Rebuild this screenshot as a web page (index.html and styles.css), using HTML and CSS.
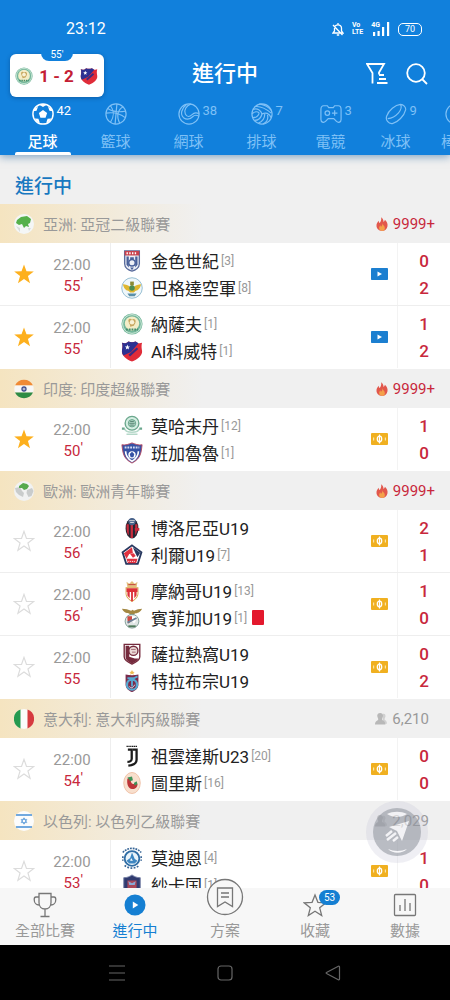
FILE: index.html
```html
<!DOCTYPE html>
<html lang="zh-Hant">
<head>
<meta charset="utf-8">
<meta name="viewport" content="width=device-width, initial-scale=1">
<title>進行中</title>
<link rel="stylesheet" href="styles.css">
</head>
<body>
<svg class="sprite" aria-hidden="true">
  <symbol id="star" viewBox="0 0 24 24"><path d="M12 1.500l2.700 7.600 8 .2-6.400 4.900 2.300 7.800L12 17.400 5.400 22l2.300-7.800L1.300 9.300l8-.2z"/></symbol>
  <symbol id="star-line" viewBox="0 0 24 24"><path d="M12 1.500l2.700 7.600 8 .2-6.400 4.900 2.300 7.800L12 17.400 5.400 22l2.300-7.800L1.300 9.300l8-.2z"/></symbol>
  <symbol id="fire" viewBox="0 0 14 16"><path fill="#e2574c" d="M6 0c2 1.600 3 3.500 2.700 5.600 1-.5 1.500-1.300 1.600-2.500C12.400 5 14 7.500 13.400 10.500 12.800 13.800 10.300 16 7 16S1 13.600.6 10.500C.3 8 1.500 6 3.200 4.200c0 1.300.3 2.200 1 2.700C5.600 5 6.600 2.800 6 0z"/><path fill="#f4a14a" d="M7.500 7c.2 2 2.800 3 2.800 5.600A3.200 3.200 0 0 1 7 16a3.200 3.200 0 0 1-3.300-3.200c0-1.500.7-2.500 1.500-3.300 0 1 .3 1.500.8 1.800C7 10 7.600 8.800 7.500 7z"/></symbol>
  <symbol id="people" viewBox="0 0 14 14"><path fill="#d0d0d0" d="M9 1c2.500-.6 3.500 1 3.200 3-.2 1.500-1 2-1 3.300 0 1.200 2.800 1.300 2.800 5.200H9z"/><path fill="#b8b8b8" d="M6 0c2 0 3.500 1.400 3.400 3.300C9.300 5.300 8.200 6.200 8.200 7.300c0 1.600 4 1.800 4 6.200H0c0-4.400 3.800-4.600 3.800-6.200 0-1.100-1.100-2-1.200-4C2.500 1.400 4 0 6 0z"/></symbol>
  <symbol id="video" viewBox="0 0 17 12"><rect width="17" height="12" rx=".8" fill="#1c7fd0"/><path fill="#fff" d="M6.500 3.500L11 6 6.500 8.500z"/></symbol>
  <symbol id="ticket" viewBox="0 0 17 12"><rect width="17" height="12" rx="1" fill="#f0b020"/><path d="M8.500 1.500v9" stroke="#fff" stroke-width="1.200"/><ellipse cx="8.500" cy="6" rx="2.200" ry="2.800" fill="none" stroke="#fff" stroke-width="1.300"/><path fill="#fbe3a8" d="M2 4.500h1.200v3H2zM13.800 4.500H15v3h-1.200z"/></symbol>
  <symbol id="nasaf" viewBox="0 0 24 24"><circle cx="12" cy="12" r="11.500" fill="#74b79b"/><circle cx="12" cy="12" r="10.200" fill="none" stroke="#d9eee0"/><circle cx="12" cy="11.500" r="7.800" fill="#f3edc8"/><path fill="#c8a75f" d="M8 8c1-2.500 3-2 4-.5 1-1.500 4-1 4 1.500 0 2-1 3-2 5l-4 1c.500-2-2-4-2-7z"/><circle cx="12" cy="10" r="2.500" fill="#f8f1d6"/><path d="M5.500 18h13" stroke="#448d6a" stroke-width="2" stroke-dasharray="2 1"/></symbol>
  <symbol id="kuwait" viewBox="0 0 24 24"><path fill="#e02c39" d="M1 3c3 1 5.500.5 7-1.500 3 1.200 5 1.200 8 0C17.500 3.500 20 4 23 3c-1 3-.5 6 0 9 .5 5-5 9.500-11 11.500C6 21.500.5 17 1 12c.5-3 1-6 0-9z"/><path fill="#2c3192" d="M1 3c3 1 5.500.5 7-1.500 3 1.200 5 1.200 8 0l3 2L11 13 2.500 17C.5 14 1 11 1.500 8.500 1.800 6 1.600 4.500 1 3z"/><path fill="#fff" d="M7 5l.8 2 2 .1-1.600 1.300.6 2L7 9.300l-1.800 1.100.6-2-1.600-1.300 2-.1z"/><path d="M9 17l9-8" stroke="#3c2c82" stroke-width="2.500"/></symbol>
</svg>

<div class="app">
  <header class="header">
    <div class="status">
      <span>23:12</span>
      <span class="status-icons">
        <svg width="12" height="13" viewBox="0 0 12 13" fill="none" stroke="#fff" stroke-width="1.300"><path d="M1 10h10L9.500 8V5C9.500 3 8 1.800 6 1.800S2.500 3 2.500 5v3zM4.800 12h2.400M1 2l9.500 10M6 0v2"/></svg>
        <span class="volte"><b>Vo</b><b>LTE</b></span>
        <span class="signal"><b>4G</b><svg width="18" height="14" viewBox="0 0 18 14" fill="#fff"><path d="M1 10h2.200v4H1zM5.500 9h2.200v5H5.500zM10 5h2.200v9H10zM15 0h2.200v14H15z"/></svg></span>
        <span class="battery">70</span>
      </span>
    </div>
    <div class="bar">
      <div class="live">
        <span class="live-time">55'</span>
        <svg class="live-crest"><use href="#nasaf"/></svg>
        <strong>1 - 2</strong>
        <svg class="live-crest"><use href="#kuwait"/></svg>
      </div>
      <h1>進行中</h1>
      <div class="tools">
        <button type="button" aria-label="篩選"><svg width="22" height="21" viewBox="0 0 22 21" fill="none" stroke="#fff" stroke-width="1.800"><path d="M6.500 20.500V10L1 1h17l-5 8.500v2M13 12h5M13 16h7M11 20h10.500"/></svg></button>
        <button type="button" aria-label="搜尋"><svg width="22" height="22" viewBox="0 0 22 22" fill="none" stroke="#fff" stroke-width="1.800"><circle cx="10" cy="10" r="8.800"/><path d="M16 16l5 5"/></svg></button>
      </div>
    </div>
    <nav class="tabs">
      <button type="button" class="tab active"><span class="tab-icon"><svg viewBox="0 0 24 24"><circle cx="12" cy="12" r="11" fill="none" stroke="#fff" stroke-width="1.600"/><path fill="#fff" d="M12 7.500l4.500 3.300-1.700 5.200H9.200l-1.700-5.200zM8 2l4 2.300L16 2l-4-1zM1.500 9L5 8.500 6.500 4 3 6zM22.500 9L19 8.500 17.500 4 21 6zM3 17l4 .2 1.500 4.300L5 20zM21 17l-4 .2-1.500 4.300L19 20z"/></svg><i>42</i></span>足球</button>
      <button type="button" class="tab"><span class="tab-icon"><svg class="line" viewBox="0 0 24 24"><circle cx="12" cy="12" r="11"/><path d="M13 1L11 23M1 11c7-1 15 0 21 5M6 3c4 5 4 12 0 18M20 4c-6 3-8 10-4 18M3 6c6 4 13 4 19 3"/></svg></span>籃球</button>
      <button type="button" class="tab"><span class="tab-icon"><svg class="line" viewBox="0 0 24 24"><circle cx="12" cy="12" r="11"/><path d="M14 1C9 3 6 8 8 12c2 4 5 3 7 1s5-3 8-1M9 2C4 6 2 12 6 16c4 3 8 1 10-1s4-2 6-1"/></svg><i>38</i></span>網球</button>
      <button type="button" class="tab"><span class="tab-icon"><svg class="line" viewBox="0 0 24 24"><circle cx="12" cy="12" r="11"/><path d="M12 12C11 8 7 5 2 7M12 12c4-2 8-1 10 4M12 12c-1 4-4 7-8 7M4 4c6-1 12 2 18 7M9 1c5 1 10 3 13 7M1 12c3-3 6-3 8-1M2 16c3 0 6-2 7-5M8 22c5-2 7-5 7-10M13 23c4-2 6-6 5-10"/></svg><i>7</i></span>排球</button>
      <button type="button" class="tab narrow"><span class="tab-icon"><svg class="line" viewBox="0 0 24 24"><path d="M4 3h4l1.500 2h5L16 3h4c2 0 3 2 3 4v11c0 3-3 4-5 2l-3-3H9l-3 3c-2 2-5 1-5-2V7c0-2 1-4 3-4z"/><circle cx="8" cy="11" r="2.500"/><path d="M16 8v6M13 11h6"/></svg><i>3</i></span>電競</button>
      <button type="button" class="tab narrow"><span class="tab-icon"><svg class="line" viewBox="0 0 24 24"><path d="M2 14C4 8 11 2 17 1.500c3 0 6 3 5.500 6C21 14 14 21 8 22.500c-4 .5-8-4-6-8.500z"/><path d="M17 1.500C20 7 12 16 3 17"/></svg><i>9</i></span>冰球</button>
      <button type="button" class="tab last"><span class="tab-icon"><svg class="line" viewBox="0 0 24 24"><circle cx="12" cy="12" r="11"/></svg></span>棒球</button>
    </nav>
  </header>

  <main class="list">
    <h2>進行中</h2>

    <section>
      <div class="league"><svg class="flag" viewBox="0 0 20 20"><circle cx="10" cy="10" r="10" fill="#f4f6f6"/><path fill="#55b04b" d="M3 6l4-3 6-1 4 3-1 4-2 1 1 3-3-1-2 2-2-4-3 1-3-2z"/><path fill="#d8dcdc" d="M2 12l4 2v4zM14 14l3 0-2 3z"/></svg><h3>亞洲: 亞冠二級聯賽</h3><span class="heat"><svg><use href="#fire"/></svg>9999+</span></div>
      <article class="match">
        <button type="button" class="star on" aria-label="收藏"><svg><use href="#star"/></svg></button>
        <div class="time"><span>22:00</span><b class="tick">55</b></div>
        <div class="teams">
          <div class="team"><svg viewBox="0 0 24 24"><path fill="#eef0f6" stroke="#5a6c9c" stroke-width="1.500" d="M4 1h16v14c0 4-4 7-8 8-4-1-8-4-8-8z"/><path fill="#c9424d" d="M4 1h16v5H4z"/><path stroke="#fff" stroke-dasharray="1.500 1.500" stroke-width="2" d="M6 3.500h12"/><path fill="#48609a" d="M6 7h2.500v12L6 16zM15.500 7H18v9l-2.500 3zM10 8h4v3h-4z"/><circle cx="12" cy="14" r="3.500" fill="none" stroke="#48609a" stroke-width="1.500"/><path fill="#48609a" d="M10 19h4l-2 3z"/></svg>金色世紀<small>[3]</small></div>
          <div class="team"><svg viewBox="0 0 24 24"><circle cx="12" cy="12" r="11.200" fill="#eff7fa" stroke="#8fb9cf"/><path fill="#dfb62f" d="M2 8c3 0 6 1 8 3l2-3 2 3c2-2 5-3 8-3-1 4-3 7-6 7l-2 2h-4l-2-2C5 15 3 12 2 8z"/><circle cx="12" cy="12" r="3" fill="#4d8d52"/><path fill="#5a8fa9" d="M7 18h10l-2 3H9z"/><path fill="#8b8a33" d="M10 5h4v4h-4z"/></svg>巴格達空軍<small>[8]</small></div>
        </div>
        <svg class="media" role="img" aria-label="直播"><use href="#video"/></svg>
        <div class="score"><b>0</b><b>2</b></div>
      </article>
      <article class="match">
        <button type="button" class="star on" aria-label="收藏"><svg><use href="#star"/></svg></button>
        <div class="time"><span>22:00</span><b class="tick">55</b></div>
        <div class="teams">
          <div class="team"><svg><use href="#nasaf"/></svg>納薩夫<small>[1]</small></div>
          <div class="team"><svg><use href="#kuwait"/></svg>Al科威特<small>[1]</small></div>
        </div>
        <svg class="media" role="img" aria-label="直播"><use href="#video"/></svg>
        <div class="score"><b>1</b><b>2</b></div>
      </article>
    </section>

    <section>
      <div class="league"><svg class="flag" viewBox="0 0 20 20"><path fill="#f08a35" d="M1 6.500a10 10 0 0 1 18 0z"/><path fill="#f7f7f7" d="M1 6.500h18a10 10 0 0 1 0 7H1a10 10 0 0 1 0-7z"/><path fill="#2e8b45" d="M1 13.500h18a10 10 0 0 1-18 0z"/><circle cx="10" cy="10" r="2" fill="none" stroke="#3d4a8c" stroke-width="1.300"/><circle cx="10" cy="10" r=".7" fill="#3d4a8c"/></svg><h3>印度: 印度超級聯賽</h3><span class="heat"><svg><use href="#fire"/></svg>9999+</span></div>
      <article class="match">
        <button type="button" class="star on" aria-label="收藏"><svg><use href="#star"/></svg></button>
        <div class="time"><span>22:00</span><b class="tick">50</b></div>
        <div class="teams">
          <div class="team"><svg viewBox="0 0 24 24"><circle cx="12" cy="9" r="7.500" fill="#d4eee2" stroke="#6ba78d" stroke-width="1.500"/><circle cx="12" cy="9" r="4" fill="#b6dfcc" stroke="#5f9a82"/><path stroke="#4c7768" d="M9 9h6M10 7h4M10 11h4"/><path fill="none" stroke="#b5d8c9" stroke-width="1.500" d="M4 15c1 5 15 5 16 0M6 21h12"/><path fill="#6ba78d" d="M1 13.500h3V16H1zM20 13.500h3V16h-3z"/></svg>莫哈末丹<small>[12]</small></div>
          <div class="team"><svg viewBox="0 0 24 24"><path fill="#3552a5" stroke="#b44761" stroke-width="1" d="M1 3c4 1 8-1 11-2 3 1 7 3 11 2-1 8-1 15-11 20C2 18 2 11 1 3z"/><path stroke="#d5dcf2" stroke-width="2" stroke-dasharray="2 1" d="M4 6h16"/><path fill="none" stroke="#fff" stroke-width="1.800" d="M5 10c0 5 2 8 7 11 5-3 7-6 7-11"/><circle cx="12" cy="14" r="4" fill="#fff"/><path fill="#3552a5" d="M9.500 13l2.500-2.500 2.500 2.500-1 3.500h-3z"/></svg>班加魯魯<small>[1]</small></div>
        </div>
        <svg class="media" role="img" aria-label="彩金"><use href="#ticket"/></svg>
        <div class="score"><b>1</b><b>0</b></div>
      </article>
    </section>

    <section>
      <div class="league"><svg class="flag" viewBox="0 0 20 20"><circle cx="10" cy="10" r="10" fill="#f1f2f2"/><path fill="#c9cccc" d="M1 7l5-1 2 4 2 2-1 4-4-2-3-3zM13 9l5-2 1.500 3-2 5-3 1-2-4z"/><path fill="#55a94d" d="M5 5l4-3 4 1 2 2-2 3-3 1-2-2-3 0z"/></svg><h3>歐洲: 歐洲青年聯賽</h3><span class="heat"><svg><use href="#fire"/></svg>9999+</span></div>
      <article class="match">
        <button type="button" class="star" aria-label="收藏"><svg><use href="#star-line"/></svg></button>
        <div class="time"><span>22:00</span><b class="tick">56</b></div>
        <div class="teams">
          <div class="team"><svg viewBox="0 0 24 24"><ellipse cx="12" cy="12.500" rx="7" ry="11" fill="#252533"/><path fill="#cb2b3c" d="M6 8h2.500v12C6.500 18 6 15 6 8zM10.500 8H13v15h-2.500zM15.500 8H18c0 6-.5 9-2.500 12z"/><circle cx="12" cy="5" r="4" fill="#4a648c"/><path stroke="#ddd" d="M9 4h6M10 6h4"/><path fill="#cb2b3c" d="M15 12h5v3h-5z"/></svg>博洛尼亞U19</div>
          <div class="team"><svg viewBox="0 0 24 24"><path fill="#fff" stroke="#27375f" stroke-width="2" d="M12 1.500l10.300 7.600-4 12.500H5.700L1.700 9.100z"/><path fill="#df3140" d="M12 3.500l-9 6.500 3 6 3-5 4-1zM6 16h12l-1.500 5h-9z"/><path fill="#27375f" d="M13 3.500l8 6-3 5-2-4z"/><path stroke="#fff" stroke-width="1" stroke-dasharray="1 1" d="M8 19h8"/><path fill="#df3140" d="M10 11l4-1 2 3-3 2z"/></svg>利爾U19<small>[7]</small></div>
        </div>
        <svg class="media" role="img" aria-label="彩金"><use href="#ticket"/></svg>
        <div class="score"><b>2</b><b>1</b></div>
      </article>
      <article class="match">
        <button type="button" class="star" aria-label="收藏"><svg><use href="#star-line"/></svg></button>
        <div class="time"><span>22:00</span><b class="tick">56</b></div>
        <div class="teams">
          <div class="team"><svg viewBox="0 0 24 24"><path fill="#e2bd7c" d="M6 2l3 2 3-3 3 3 3-2-1 6H7z"/><path fill="#d9a548" d="M5 8h14v7c0 4-4 7-7 9-3-2-7-5-7-9z"/><path fill="#fff" d="M6 9h12v6c0 3-3 6-6 8-3-2-6-5-6-8z"/><path fill="#dc3038" d="M6 9h12v4H6zM7 12h2.500v8L7 17zM11 12h2v11l-1 .5-1-.5zM14.500 12H17v5l-2.500 3z"/><path stroke="#c43c38" d="M8 5h8"/></svg>摩納哥U19<small>[13]</small></div>
          <div class="team"><svg viewBox="0 0 24 24"><path fill="#a38742" d="M1 2c4 0 7 1 10 2l2-1 1 1c3-1 6-2 9-2-2 4-5 5-8 5l-1 2h-4L9 7C6 7 3 6 1 2z"/><circle cx="12" cy="15.500" r="7.500" fill="#dfe5e4" stroke="#7c9993"/><path fill="#d04a43" d="M7 10h5v5l-4 3c-1-3-1-5-1-8z"/><path fill="#fff" d="M12 10h5c0 4-1 6-3 8l-2-3z"/><path d="M7 17l10-5" stroke="#6b7f95" stroke-width="2"/><path d="M8 21h8" stroke="#4e7a5a" stroke-width="2"/></svg>賓菲加U19<small>[1]</small><span class="card" role="img" aria-label="紅牌"></span></div>
        </div>
        <svg class="media" role="img" aria-label="彩金"><use href="#ticket"/></svg>
        <div class="score"><b>1</b><b>0</b></div>
      </article>
      <article class="match">
        <button type="button" class="star" aria-label="收藏"><svg><use href="#star-line"/></svg></button>
        <div class="time"><span>22:00</span><b>55</b></div>
        <div class="teams">
          <div class="team"><svg viewBox="0 0 24 24"><path fill="#fff" stroke="#752b3d" stroke-width="1.500" d="M3.500 1.500h17V15c0 4-4 6-8.500 8-4.500-2-8.500-4-8.500-8z"/><path fill="#752b3d" d="M5 3h4v12l6 2h4c-1 3-4 4-7 5.500C9 21 5 19 5 15z"/><circle cx="13.500" cy="8.500" r="5" fill="#ead9d6" stroke="#752b3d" stroke-width="1.500"/><path stroke="#a16571" d="M11 7h5M12 10h4"/></svg>薩拉熱窩U19</div>
          <div class="team"><svg viewBox="0 0 24 24"><path fill="#7a2b4b" d="M5 5c5 1 9 1 14 0v11c0 4-4 7-7 8-3-1-7-4-7-8z"/><path fill="#edb94e" d="M12 0l1 2 2 .1-1.500 1.200.5 1.900-2-1-2 1 .5-1.900L9 2.100l2-.1z"/><circle cx="12" cy="16" r="5.500" fill="none" stroke="#56a9d2" stroke-width="2.500"/><path fill="none" stroke="#56a9d2" stroke-width="2" d="M7 9h7l4-2M12 9v9"/><path stroke="#d9edf5" d="M9 18c2 2 4 2 6-2" fill="none"/></svg>特拉布宗U19</div>
        </div>
        <svg class="media" role="img" aria-label="彩金"><use href="#ticket"/></svg>
        <div class="score"><b>0</b><b>2</b></div>
      </article>
    </section>

    <section>
      <div class="league"><svg class="flag" viewBox="0 0 20 20"><circle cx="10" cy="10" r="10" fill="#fbfbfb"/><path fill="#259a50" d="M6.500.6v18.800a10 10 0 0 1 0-18.800z"/><path fill="#d63a3f" d="M13.500.6v18.800a10 10 0 0 0 0-18.800z"/></svg><h3>意大利: 意大利丙級聯賽</h3><span class="heat plain"><svg><use href="#people"/></svg>6,210</span></div>
      <article class="match">
        <button type="button" class="star" aria-label="收藏"><svg><use href="#star-line"/></svg></button>
        <div class="time"><span>22:00</span><b class="tick">54</b></div>
        <div class="teams">
          <div class="team"><svg viewBox="0 0 24 24" fill="none" stroke="#1c1c1c"><path stroke-width="1.600" stroke-dasharray="1.500 .5" d="M6 1.500h12"/><path stroke-width="2.500" d="M7.500 5h4.200v10c0 2-2 3.500-4.700 3.500"/><path stroke-width="2.500" d="M13 5h4v11c0 4-4 6-9 6.500"/></svg>祖雲達斯U23<small>[20]</small></div>
          <div class="team"><svg viewBox="0 0 24 24"><ellipse cx="12" cy="12" rx="9" ry="11.500" fill="#f8dfcd" stroke="#efbfa5"/><path fill="#bd3437" d="M7 7l4 0c-1 3 0 5 2 6l5 0c0 4-3 6-6 5.500C8 18 6 13 7 7z"/><path fill="#3f9258" d="M7 6l5-1 1 4-3 1zM14 12l3-2 1 3-3 2z"/></svg>圖里斯<small>[16]</small></div>
        </div>
        <svg class="media" role="img" aria-label="彩金"><use href="#ticket"/></svg>
        <div class="score"><b>0</b><b>0</b></div>
      </article>
    </section>

    <section>
      <div class="league"><svg class="flag" viewBox="0 0 20 20"><circle cx="10" cy="10" r="10" fill="#fcfcfc"/><path stroke="#72a9df" stroke-width="2" d="M2 4h16M2 16h16"/><path fill="none" stroke="#72a9df" d="M10 6.800l2.800 4.800H7.200zM10 13.200L7.200 8.400h5.600z"/></svg><h3>以色列: 以色列乙級聯賽</h3><span class="heat plain"><svg><use href="#people"/></svg>2,029</span></div>
      <article class="match">
        <button type="button" class="star" aria-label="收藏"><svg><use href="#star-line"/></svg></button>
        <div class="time"><span>22:00</span><b class="tick">53</b></div>
        <div class="teams">
          <div class="team"><svg viewBox="0 0 24 24"><path fill="none" stroke="#376596" stroke-width="1.800" stroke-dasharray="2 1" d="M2 6C7 0 17 0 22 6"/><circle cx="12" cy="12.500" r="8" fill="#eaf4fa" stroke="#2f6da5" stroke-width="2"/><path fill="#3d86c1" d="M6 15l4-3 2-6 3 7 3 2-3 3H9z"/><path fill="#fff" d="M11 12l2 3h-3z"/><path fill="none" stroke="#376596" stroke-width="1.800" stroke-dasharray="2 1.500" d="M4 20c4 4 12 4 16 0M2 10v5M22 10v5"/></svg>莫迪恩<small>[4]</small></div>
          <div class="team"><svg viewBox="0 0 24 24"><path fill="#303b70" stroke="#7580a5" d="M3 4c4 0 6-1 9-3 3 2 5 3 9 3v12c-1 4-5 6-9 7-4-1-8-3-9-7z"/><path fill="#a84759" d="M7 7h10v8l-5 5-5-5z"/><path fill="#88a9d7" d="M8 8l4 2 4-2-1 4H9z"/></svg>紗卡国<small>[1]</small></div>
        </div>
        <svg class="media" role="img" aria-label="彩金"><use href="#ticket"/></svg>
        <div class="score"><b>1</b><b>0</b></div>
      </article>
    </section>
  </main>

  <nav class="nav">
    <button type="button" class="compass" aria-label="導航"><svg viewBox="0 0 48 48"><circle cx="24" cy="24" r="24" fill="#8e939c"/><path fill="#fff" d="M14 6c6-3 14-3 20 0-6 4-14 4-20 0zM15 41c6 2.500 13 2.500 19 0-5 5-14 5-19 0z"/><path fill="#fff" d="M36 13L16 19l8 4 5 10z"/><path stroke="#fff" stroke-width="2.500" d="M13 28l6-5M14 32l9-7M20 33l5-4"/></svg></button>
    <a href="#all"><svg viewBox="0 0 24 26"><path d="M6 1.500h12v9c0 4-2.500 6.500-6 6.500s-6-2.500-6-6.500zM6 5H3c-1.500 0-1.800 1-1.800 2.500C1.200 11 3.500 13 6 13M18 5h3c1.500 0 1.800 1 1.800 2.500 0 3.500-2.300 5.500-4.800 5.500M12 17v7.500M7.500 24.500h9"/></svg>全部比賽</a>
    <a href="#live" class="current"><svg viewBox="0 0 24 26"><circle cx="12" cy="13" r="10.500" fill="#157fd2" stroke="none"/><path fill="#fff" stroke="none" d="M9.800 9.500l5.500 3.500-5.500 3.500z"/></svg>進行中</a>
    <a href="#plan"><svg class="raised" viewBox="0 0 38 38"><circle cx="19" cy="19" r="17.500" fill="#f7f7f7"/><path d="M11.500 10h15v18.500L19 24l-7.500 4.500zM15 15h8M15 19h8"/></svg>方案</a>
    <a href="#saved"><svg viewBox="0 0 24 26"><path d="M12 3l2.900 7.300 7.900.5-6.100 5 2 7.700-6.700-4.300-6.700 4.300 2-7.700-6.100-5 7.900-.5z"/></svg><span class="badge">53</span>收藏</a>
    <a href="#data"><svg viewBox="0 0 24 26"><rect x="1.500" y="2.500" width="21" height="21" rx="1"/><path d="M7 13v6M12 7v12M17 11v8"/></svg>數據</a>
  </nav>

  <footer class="system">
    <button type="button" aria-label="最近"><svg viewBox="0 0 18 18"><path d="M1 2h16M1 9h16M1 16h16"/></svg></button>
    <button type="button" aria-label="主頁"><svg viewBox="0 0 18 18"><rect x="2" y="2" width="14" height="14" rx="3"/></svg></button>
    <button type="button" aria-label="返回"><svg viewBox="0 0 18 18"><path d="M15.500 3v12c0 .8-.5 1-1.200.7L2.500 9.500c-.5-.3-.5-.7 0-1l11.800-6.200c.7-.3 1.200-.1 1.200.7z"/></svg></button>
  </footer>
</div>
</body>
</html>
```

FILE: styles.css
```css
* { box-sizing: border-box; }

body {
  margin: 0;
  background: #fff;
  font-family: Roboto, "Noto Sans CJK TC", sans-serif;
  font-size: 15px;
  color: #222;
}

button {
  padding: 0;
  border: 0;
  background: none;
  font: inherit;
  color: inherit;
}

h1, h2, h3 { margin: 0; }

.sprite { position: absolute; width: 0; height: 0; }

.app {
  display: flex;
  flex-direction: column;
  height: 100vh;
}

/* Header */
.header {
  position: relative;
  z-index: 1;
  flex: none;
  background: #1180dc;
  color: #fff;
  box-shadow: 0 2px 8px rgba(20, 90, 150, 0.5);
}

.status {
  display: flex;
  align-items: center;
  justify-content: space-between;
  padding: 18px 28px 0 66px;
  line-height: 22px;
  font-size: 16px;
}

.status-icons { display: flex; align-items: center; gap: 8px; }

.volte, .signal b { font-size: 7px; line-height: 7px; }
.volte b { display: block; }
.signal { display: flex; align-items: flex-start; }
.signal svg { margin-left: -8px; }

.battery {
  width: 24px;
  border: 1px solid #fff;
  border-radius: 5px;
  font-size: 9px;
  line-height: 11px;
  text-align: center;
}

.bar {
  display: grid;
  grid-template-columns: 1fr auto 1fr;
  align-items: center;
  height: 58px;
  padding: 9px 10px 0;
}

.bar h1 { font-size: 22px; font-weight: 500; line-height: 30px; }

.live {
  position: relative;
  display: flex;
  align-items: center;
  justify-content: space-between;
  width: 94px;
  height: 43px;
  padding: 0 6px 0 5px;
  margin-top: 4px;
  border-radius: 6px;
  background: #fff;
  color: #c41e35;
  box-shadow: 0 1px 4px rgba(0, 40, 90, 0.4);
}

.live strong { font-size: 17px; font-weight: 700; }
.live-crest { width: 18px; height: 18px; }

.live-time {
  position: absolute;
  top: -6px;
  left: 31px;
  width: 32px;
  border-radius: 0 0 8px 8px;
  background: #1180dc;
  color: #fff;
  font-size: 10px;
  line-height: 13px;
  text-align: center;
}

.tools { display: flex; justify-content: flex-end; gap: 18px; padding-right: 12px; }
.tools svg { display: block; }

.tabs {
  display: flex;
  height: 57px;
  padding-left: 6px;
  overflow: hidden;
}

.tab {
  flex: none;
  display: flex;
  flex-direction: column;
  align-items: center;
  width: 73px;
  padding-top: 5px;
  line-height: 24px;
  color: #7fc0f6;
  position: relative;
}

.tab.narrow { width: 65px; }
.tab.last { width: 56px; }
.tab.active { color: #fff; font-weight: 500; }

.tab.active::after {
  content: "";
  position: absolute;
  bottom: 0;
  left: 9px;
  right: 8px;
  height: 3px;
  border-radius: 2px 2px 0 0;
  background: #fff;
}

.tab-icon { position: relative; height: 27px; }
.tab-icon svg { display: block; width: 22px; height: 22px; }
.tab-icon i {
  position: absolute;
  top: 0;
  left: 25px;
  font-size: 13px;
  font-style: normal;
  font-weight: 400;
  line-height: 16px;
}

.line { fill: none; stroke: #7fc0f6; stroke-width: 1.3; }

/* Match list */
.list {
  flex: 1;
  min-height: 0;
  overflow: hidden;
  background: #fff;
}

.list h2 {
  padding: 16px 15px 1px;
  background: #f0f0f0;
  color: #1878c0;
  font-size: 19px;
  font-weight: 500;
  line-height: 32px;
}

.league {
  display: flex;
  align-items: center;
  height: 39px;
  padding: 0 15px 0 14px;
  background: linear-gradient(90deg, #f5e4c0, #f0f0f0 45%);
  color: #999;
}

.league h3 {
  flex: 1;
  padding-left: 9px;
  font-size: 15px;
  font-weight: 400;
}

.flag { width: 20px; height: 20px; }

.heat {
  display: flex;
  align-items: center;
  gap: 5px;
  color: #c8283c;
}

.heat svg { width: 12px; height: 14px; }
.heat.plain { padding-right: 6px; color: #999; }

.match {
  display: grid;
  grid-template-columns: 48px 62px 1fr 26px 53px;
  align-items: center;
  height: 63px;
  border-bottom: 1px solid #eee;
}

.match:last-child { border-bottom-color: transparent; }

.star svg {
  display: block;
  width: 22px;
  height: 22px;
  margin: 0 auto;
  fill: none;
  stroke: #dcdcdc;
  stroke-width: 1.3;
}

.star.on svg { fill: #fdb01e; stroke: none; }

.time {
  display: grid;
  justify-items: center;
  padding: 3px 14px 0 0;
  line-height: 21px;
  color: #999;
}

.time b { position: relative; color: #c8283c; font-weight: 400; }

.tick::after {
  content: "'";
  position: absolute;
  left: 100%;
  top: -3px;
}

.teams {
  align-self: stretch;
  display: flex;
  flex-direction: column;
  justify-content: center;
  padding-left: 10px;
  border-left: 1px solid #eee;
}

.team {
  display: flex;
  align-items: center;
  height: 27px;
  font-size: 17px;
  white-space: nowrap;
}

.team svg { width: 22px; height: 22px; margin-right: 8px; }
.team small { margin-left: 2px; color: #999; font-size: 12px; }
.card { width: 12px; height: 15px; margin-left: 5px; border-radius: 1px; background: #e3182d; }

.media { width: 17px; height: 12px; }

.score {
  align-self: stretch;
  display: grid;
  align-content: center;
  justify-items: center;
  padding-top: 2px;
  border-left: 1px solid #f3f3f3;
  color: #c8283c;
  font-size: 17px;
  line-height: 27px;
}

.score b { font-weight: 500; }

/* Bottom navigation */
.nav {
  position: relative;
  z-index: 1;
  flex: none;
  display: grid;
  grid-template: 57px / repeat(5, 1fr);
  background: #f7f7f7;
}

.nav a {
  position: relative;
  display: flex;
  flex-direction: column;
  align-items: center;
  justify-content: flex-end;
  gap: 1px;
  min-height: 0;
  padding-bottom: 2px;
  color: #999;
  line-height: 24px;
  text-decoration: none;
}

.nav a svg { flex: none; width: 24px; height: 26px; fill: none; stroke: #777; stroke-width: 1.3; }
.nav a .raised { width: 38px; height: 38px; margin-bottom: 2px; }
.nav a.current { color: #157fd2; }

.badge {
  position: absolute;
  top: 2px;
  left: 50%;
  margin-left: 4px;
  width: 21px;
  border-radius: 8px;
  background: #157fd2;
  color: #fff;
  font-size: 10px;
  line-height: 15px;
  text-align: center;
}

.compass {
  position: absolute;
  right: 22px;
  bottom: 82px;
  padding: 7px;
  border-radius: 50%;
  background: rgba(190, 190, 210, 0.25);
}

.compass svg { display: block; width: 48px; height: 48px; opacity: 0.55; }

/* System buttons */
.system {
  flex: none;
  display: flex;
  align-items: center;
  justify-content: center;
  gap: 90px;
  height: 55px;
  background: #000;
}

.system svg { display: block; width: 18px; height: 18px; fill: none; stroke: #666; stroke-width: 1.2; }
```
